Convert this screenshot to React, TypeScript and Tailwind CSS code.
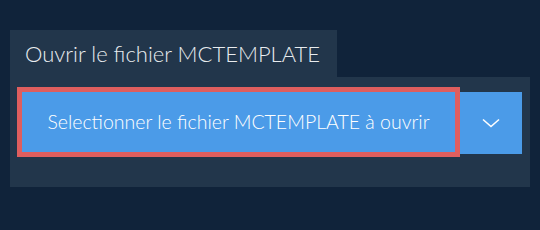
import React from 'react';

const Chevron: React.FC = () => (
  <svg width="18" height="10" viewBox="0 0 18 10" fill="none" className="block">
    <path d="M1 1.5 L9 8.5 L17 1.5" stroke="#ffffff" strokeWidth="1.6" />
  </svg>
);

export default function App() {
  return (
    <div
      className="w-[540px] h-[230px] bg-[#10233a] pt-[30px] pl-[10px]"
      style={{ fontFamily: 'Lato, "Noto Sans", sans-serif' }}
    >
      {/* tab */}
      <div className="w-[327px] h-[47px] bg-[#22364b] flex items-center pl-[15px] text-[#e8ecef] text-[22px] font-light">
        Ouvrir le fichier MCTEMPLATE
      </div>

      {/* panel */}
      <div className="w-[520px] bg-[#22364b] pt-[10px] pl-[7px] pb-[30px] flex items-start">
        <button className="w-[443px] h-[70px] border-[5px] border-[#df5e5e] bg-[#4b9be8] text-white text-[19.5px] font-light flex items-center justify-center">
          Selectionner le fichier MCTEMPLATE à ouvrir
        </button>
        <button className="mt-[5px] w-[62px] h-[62px] bg-[#4b9be8] flex items-center justify-center">
          <Chevron />
        </button>
      </div>
    </div>
  );
}
